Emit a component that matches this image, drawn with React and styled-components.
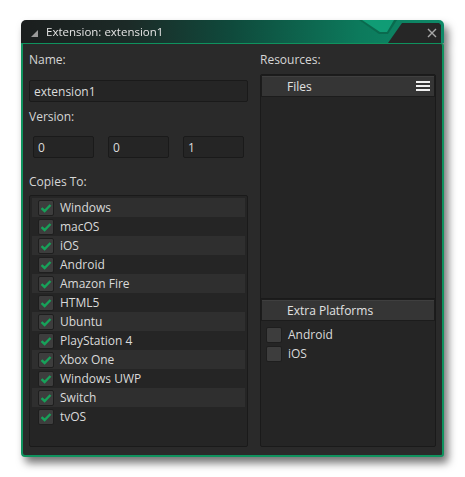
import React from "react";
import styled, { createGlobalStyle } from "styled-components";

const Global = createGlobalStyle`
  html, body { margin: 0; padding: 0; background: #ffffff; }
  body { font-family: "Open Sans", "Noto Sans", sans-serif; }
`;

const Page = styled.div`
  padding: 20px 0 0 21px;
  width: 465px;
  height: 477px;
  box-sizing: border-box;
`;

const Window = styled.div`
  width: 423px;
  display: flex;
  flex-direction: column;
  filter: drop-shadow(4px 6px 4px rgba(0, 0, 0, 0.55));
`;

const TitleBar = styled.div`
  position: relative;
  height: 23px;
  display: flex;
  align-items: center;
  padding-left: 10px;
  gap: 8px;
  border-radius: 5px 5px 0 0;
  background: linear-gradient(90deg, #1b1e1e 0%, #1c2a27 25%, #0f4a3c 50%, #0c7a5c 80%, #0e8a68 100%);
  color: #e4e4e4;
  font-size: 11.5px;
`;

const Caret = styled.svg`
  width: 7px;
  height: 7px;
  margin-top: 3px;
`;

const Notch = styled.svg`
  position: absolute;
  left: 338px;
  top: 0;
  width: 85px;
  height: 23px;
`;

const CloseX = styled.svg`
  position: absolute;
  right: 7px;
  top: 8px;
  width: 10px;
  height: 10px;
`;

const Body = styled.div`
  height: 414px;
  box-sizing: border-box;
  background: #2a2a2a;
  border: 2px solid #0f925e;
  border-top-width: 1px;
  border-radius: 0 3px 3px 4px;
  display: flex;
  gap: 12px;
  padding: 8px 6px 8px 6px;
`;

const Column = styled.div`
  display: flex;
  flex-direction: column;
  width: ${(p) => p.$w}px;
`;

const Label = styled.div`
  color: #d6d6d6;
  font-size: 12px;
  height: 16px;
  line-height: 16px;
  margin-top: ${(p) => p.$mt || 0}px;
  margin-bottom: ${(p) => p.$mb || 0}px;
`;

const Input = styled.div`
  box-sizing: border-box;
  height: 22px;
  width: ${(p) => (p.$w ? p.$w + "px" : "100%")};
  background: #252525;
  border: 1px solid #1a1a1a;
  border-radius: 2px;
  color: #dcdcdc;
  font-size: 12px;
  display: flex;
  align-items: center;
  padding-left: 4px;
`;

const VersionRow = styled.div`
  display: flex;
  justify-content: space-between;
  padding: 0 4px;
  margin: 11px 0 16px;
`;

const ListBox = styled.div`
  flex: 1;
  background: #252525;
  border: 1px solid #1a1a1a;
  border-radius: 2px;
  padding: 2px 2px;
  display: flex;
  flex-direction: column;
`;

const Row = styled.div`
  height: 19px;
  display: flex;
  align-items: center;
  gap: 6px;
  padding-left: ${(p) => p.$pl ?? 6}px;
  background: ${(p) => (p.$alt ? "#2f2f2f" : "transparent")};
  color: #dadada;
  font-size: 12px;
`;

const Box = styled.div`
  width: 16px;
  height: 16px;
  box-sizing: border-box;
  background: #3d3d3d;
  border: 1px solid #1e1e1e;
  border-radius: 2px;
  display: flex;
  align-items: center;
  justify-content: center;
  flex-shrink: 0;
`;

const Panel = styled.div`
  flex: 1;
  background: #252525;
  border: 1px solid #1a1a1a;
  border-radius: 2px;
  display: flex;
  flex-direction: column;
  margin-top: 6px;
`;

const Header = styled.div`
  height: 22px;
  box-sizing: border-box;
  background: #353535;
  border: 1px solid #1c1c1c;
  box-shadow: inset 0 1px 0 #3f3f3f;
  display: flex;
  align-items: center;
  padding-left: 25px;
  padding-right: 4px;
  color: #e2e2e2;
  font-size: 12px;
  justify-content: space-between;
`;

const FilesArea = styled.div`
  height: 201px;
  border-bottom: 1px solid #1a1a1a;
`;

const ExtraList = styled.div`
  display: flex;
  flex-direction: column;
  padding: 4px 0 0 0;
`;

const Burger = styled.div`
  display: flex;
  flex-direction: column;
  gap: 2px;
  & > span {
    width: 14px;
    height: 2px;
    background: #f0f0f0;
    display: block;
  }
`;

const Check = () => (
  <svg width="12" height="10" viewBox="0 0 12 10">
    <path d="M1.5 5.2 L4.6 8 L10.5 2" fill="none" stroke="#17a25a" strokeWidth="2.4" />
  </svg>
);

const platforms = [
  "Windows",
  "macOS",
  "iOS",
  "Android",
  "Amazon Fire",
  "HTML5",
  "Ubuntu",
  "PlayStation 4",
  "Xbox One",
  "Windows UWP",
  "Switch",
  "tvOS",
];

export default function App() {
  return (
    <Page>
      <Global />
      <Window>
        <TitleBar>
          <Caret viewBox="0 0 8 8">
            <polygon points="8,0 8,8 0,8" fill="#9a9a9a" />
          </Caret>
          <span>Extension: extension1</span>
          <Notch viewBox="0 0 85 23">
            <polygon points="0,0 38,0 29,14 20,14" fill="#0a6a4e" />
            <polygon points="3,0 35,0 28,12 21,12" fill="#109c75" />
            <polygon points="29,23 43,3 80,3 82,5 82,23" fill="#262626" />
          </Notch>
          <CloseX viewBox="0 0 10 10">
            <path d="M1 1 L9 9 M9 1 L1 9" stroke="#a8a8a8" strokeWidth="1.4" />
          </CloseX>
        </TitleBar>
        <Body>
          <Column $w={219}>
            <Label $mb={12}>Name:</Label>
            <Input>extension1</Input>
            <Label $mt={7}>Version:</Label>
            <VersionRow>
              <Input $w={61}>0</Input>
              <Input $w={61}>0</Input>
              <Input $w={61}>1</Input>
            </VersionRow>
            <Label $mb={5}>Copies To:</Label>
            <ListBox>
              {platforms.map((p, i) => (
                <Row key={p} $alt={i % 2 === 0}>
                  <Box>
                    <Check />
                  </Box>
                  {p}
                </Row>
              ))}
            </ListBox>
          </Column>
          <Column $w={176}>
            <Label>Resources:</Label>
            <Panel>
              <Header>
                Files
                <Burger>
                  <span />
                  <span />
                  <span />
                </Burger>
              </Header>
              <FilesArea />
              <Header>Extra Platforms</Header>
              <ExtraList>
                <Row $pl={5}>
                  <Box />
                  Android
                </Row>
                <Row $pl={5}>
                  <Box />
                  iOS
                </Row>
              </ExtraList>
            </Panel>
          </Column>
        </Body>
      </Window>
    </Page>
  );
}
